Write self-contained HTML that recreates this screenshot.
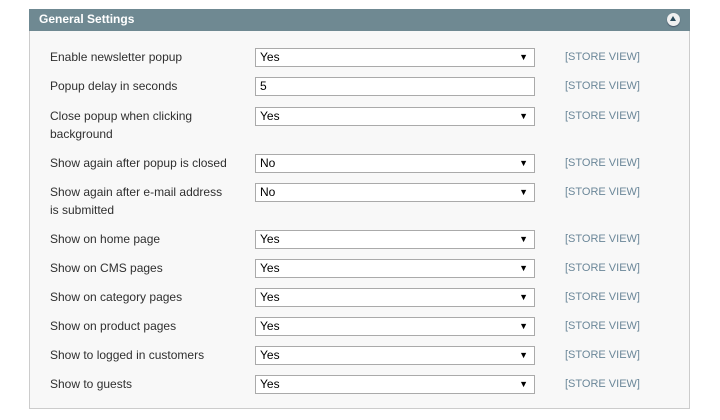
<!DOCTYPE html>
<html><head><style>
body{margin:0;width:720px;height:420px;background:#fff;font-family:"Liberation Sans",Arial,sans-serif;position:relative;overflow:hidden}
.hd{position:absolute;left:29px;top:9px;width:661px;height:22px;background:#6f8992;color:#fff;font-weight:bold;font-size:12px;line-height:21px;box-sizing:border-box;padding-left:10px}
.ic{position:absolute;right:10px;top:4px;width:13px;height:13px;border-radius:50%;background:#f0f0f0;box-shadow:0 1px 1px #456}
.ic:after{content:"";position:absolute;left:3px;top:3px;border-left:3.5px solid transparent;border-right:3.5px solid transparent;border-bottom:5px solid #2a4a5a}
.bx{position:absolute;left:29px;top:31px;width:661px;height:378px;background:#f8f8f8;border:1px solid #ccc;border-top:none;box-sizing:border-box}
.l{position:absolute;left:50px;font-size:12px;color:#2f2f2f;line-height:18px}
.s{position:absolute;left:255px;width:280px;height:19px;border:1px solid #aaa;background:#fff;box-sizing:border-box;font-size:12px;line-height:17px;padding-left:4px;color:#000}
.s.d:after{content:"▼";position:absolute;right:6px;top:0;font-size:9px}
.v{position:absolute;left:565px;font-size:11px;color:#6b8799;line-height:18px}
</style></head><body>
<div class="bx"></div>
<div class="hd">General Settings<div class="ic"></div></div>

<div class="l" style="top:48px">Enable newsletter popup</div><div class="s d" style="top:48px">Yes</div><div class="v" style="top:48px">[STORE VIEW]</div>
<div class="l" style="top:77px">Popup delay in seconds</div><div class="s" style="top:77px">5</div><div class="v" style="top:77px">[STORE VIEW]</div>
<div class="l" style="top:107px">Close popup when clicking<br>background</div><div class="s d" style="top:107px">Yes</div><div class="v" style="top:107px">[STORE VIEW]</div>
<div class="l" style="top:154px">Show again after popup is closed</div><div class="s d" style="top:154px">No</div><div class="v" style="top:154px">[STORE VIEW]</div>
<div class="l" style="top:183px">Show again after e-mail address<br>is submitted</div><div class="s d" style="top:183px">No</div><div class="v" style="top:183px">[STORE VIEW]</div>
<div class="l" style="top:230px">Show on home page</div><div class="s d" style="top:230px">Yes</div><div class="v" style="top:230px">[STORE VIEW]</div>
<div class="l" style="top:259px">Show on CMS pages</div><div class="s d" style="top:259px">Yes</div><div class="v" style="top:259px">[STORE VIEW]</div>
<div class="l" style="top:288px">Show on category pages</div><div class="s d" style="top:288px">Yes</div><div class="v" style="top:288px">[STORE VIEW]</div>
<div class="l" style="top:317px">Show on product pages</div><div class="s d" style="top:317px">Yes</div><div class="v" style="top:317px">[STORE VIEW]</div>
<div class="l" style="top:346px">Show to logged in customers</div><div class="s d" style="top:346px">Yes</div><div class="v" style="top:346px">[STORE VIEW]</div>
<div class="l" style="top:375px">Show to guests</div><div class="s d" style="top:375px">Yes</div><div class="v" style="top:375px">[STORE VIEW]</div>
</body></html>
